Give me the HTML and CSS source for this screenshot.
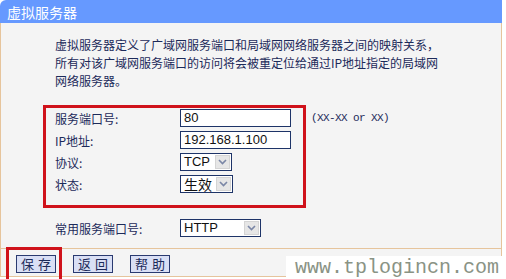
FILE: index.html
```html
<!DOCTYPE html>
<html>
<head>
<meta charset="utf-8">
<link rel="stylesheet" href="styles.css">
</head>
<body>
<div class="panel">
  <div class="head">虚拟服务器</div>
  <div class="body">
    <p class="desc">虚拟服务器定义了广域网服务端口和局域网网络服务器之间的映射关系，<br>所有对该广域网服务端口的访问将会被重定位给通过IP地址指定的局域网<br>网络服务器。</p>
    <div class="form">
      <div class="row"><span class="label">服务端口号:</span><span class="input">80</span><span class="hint">(XX-XX or XX)</span></div>
      <div class="row"><span class="label">IP地址:</span><span class="input">192.168.1.100</span></div>
      <div class="row"><span class="label">协议:</span><span class="select s-tcp"><span class="val latin">TCP</span><span class="arr"><svg width="9" height="6" viewBox="0 0 9 6"><path d="M1 1 L4.5 4.5 L8 1" fill="none" stroke="#7a86a6" stroke-width="1.6"/></svg></span></span></div>
      <div class="row"><span class="label">状态:</span><span class="select s-state"><span class="val cjk">生效</span><span class="arr"><svg width="9" height="6" viewBox="0 0 9 6"><path d="M1 1 L4.5 4.5 L8 1" fill="none" stroke="#7a86a6" stroke-width="1.6"/></svg></span></span></div>
    </div>
    <div class="row common"><span class="label">常用服务端口号:</span><span class="select s-http"><span class="val latin">HTTP</span><span class="arr"><svg width="9" height="6" viewBox="0 0 9 6"><path d="M1 1 L4.5 4.5 L8 1" fill="none" stroke="#7a86a6" stroke-width="1.6"/></svg></span></span></div>
  </div>
  <div class="foot">
    <button class="btn">保存</button>
    <button class="btn">返回</button>
    <button class="btn">帮助</button>
  </div>
</div>
<div class="mark mark-form"></div>
<div class="mark mark-save"></div>
<div class="wm">www.tplogincn.com</div>
</body>
</html>
```
FILE: styles.css
```css
html, body {
  margin: 0;
  padding: 0;
  background: #ffffff;
}
body {
  font-family: "Noto Sans CJK SC", sans-serif;
  width: 506px;
  height: 279px;
  overflow: hidden;
  position: relative;
}
.panel {
  width: 502px;
}
.head {
  height: 23px;
  background: #6699ff;
  border-top-left-radius: 6px;
  color: #ffffff;
  font-size: 14px;
  line-height: 24px;
  padding-left: 7px;
}
.body {
  background: #f4f4f4;
  border-left: 1px solid #e6c49c;
  border-right: 1px solid #e6c49c;
  border-bottom: 1px solid #e6c49c;
  padding: 13px 0 9px 54px;
  color: #1c2a5a;
  font-size: 12px;
}
.desc {
  margin: 0;
  line-height: 18px;
}
.form {
  margin-top: 17px;
}
.row {
  display: flex;
  align-items: center;
  height: 22px;
}
.label {
  width: 125px;
  flex: none;
}
.input {
  box-sizing: border-box;
  width: 111px;
  height: 18px;
  border: 1px solid #1e3468;
  background: #ffffff;
  font: 13px "Liberation Sans", Arial, sans-serif;
  line-height: 16px;
  padding-left: 3px;
  color: #111111;
}
.hint {
  margin-left: 20px;
  font: 11px "Liberation Mono", monospace;
  letter-spacing: -0.6px;
  color: #1c2a5a;
}
.select {
  box-sizing: border-box;
  display: flex;
  height: 18px;
  border: 1px solid #1e3468;
  background: #ffffff;
  color: #111111;
}
.s-tcp { width: 52px; }
.s-state { width: 53px; }
.s-http { width: 81px; }
.val {
  flex: 1;
  padding-left: 3px;
  line-height: 16px;
}
.latin {
  font: 13px "Liberation Sans", Arial, sans-serif;
  line-height: 16px;
}
.cjk {
  font-size: 14px;
  line-height: 16px;
}
.arr {
  box-sizing: border-box;
  width: 15px;
  margin: 1px;
  background: #e6e6e6;
  border: 1px solid #d4d4d4;
  display: flex;
  align-items: center;
  justify-content: center;
}
.common {
  margin-top: 22px;
}
.foot {
  display: flex;
  gap: 17px;
  padding: 6px 0 3px 15px;
  background: #f4f4f4;
  border-left: 1px solid #e6c49c;
  border-right: 1px solid #e6c49c;
  border-bottom: 1px solid #e6c49c;
}
.btn {
  box-sizing: border-box;
  width: 40px;
  height: 18px;
  border: 1px solid #2a3a70;
  background: #d9dff5;
  color: #1c2a5a;
  font-family: "Noto Sans CJK SC", sans-serif;
  font-size: 13px;
  line-height: 16px;
  letter-spacing: 4px;
  padding: 0 0 0 4px;
  margin: 0;
  text-align: left;
}
.mark {
  position: absolute;
  border: 3px solid #d0121b;
  box-sizing: border-box;
}
.mark-form {
  left: 43px;
  top: 105px;
  width: 263px;
  height: 103px;
}
.mark-save {
  left: 6px;
  top: 247px;
  width: 56px;
  height: 40px;
}
.wm {
  position: absolute;
  left: 286px;
  top: 256px;
  width: 220px;
  height: 23px;
  background: #ffffff;
  color: #8a9385;
  font: 20px "Liberation Mono", monospace;
  line-height: 24px;
  padding-left: 9px;
  box-sizing: border-box;
  white-space: nowrap;
}
```
